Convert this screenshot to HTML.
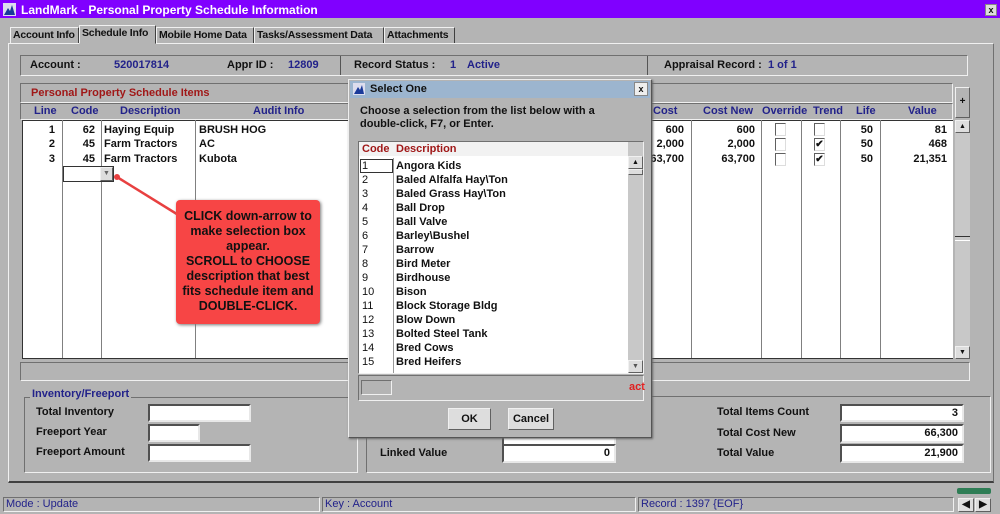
<!DOCTYPE html>
<html><head><meta charset="utf-8"><style>
*{box-sizing:border-box;margin:0;padding:0}
body{width:1000px;height:514px;background:#b4b4b4;font-family:"Liberation Sans",sans-serif;font-size:11px;font-weight:bold;color:#111;position:relative;overflow:hidden}
.a{position:absolute;white-space:nowrap}
.blue{color:#22228a}
.red{color:#a01818}
.sunk{border:1px solid;border-color:#707070 #f0f0f0 #f0f0f0 #707070}
.rais{border:1px solid;border-color:#f0f0f0 #606060 #606060 #f0f0f0}
.inp{position:absolute;background:#fff;border:2px solid;border-color:#505050 #e8e8e8 #e8e8e8 #505050;text-align:right;padding-right:4px;line-height:14px}
.tab{position:absolute;top:27px;height:17px;border:1px solid;border-color:#f0f0f0 #404040 #b4b4b4 #f0f0f0;padding:1px 2px;font-size:10.5px;white-space:nowrap;overflow:hidden;letter-spacing:-0.2px}
.vl{position:absolute;top:120px;height:238px;width:1px;background:#808080}
.cb{position:absolute;width:11px;height:13px;background:#fff;border:1px solid;border-color:#606060 #ddd #ddd #606060;font-size:10px;line-height:11px;text-align:center}
.r{text-align:right}
</style></head><body>
<!-- title -->
<div class="a" style="left:0;top:0;width:1000px;height:18px;background:#8000ff"></div>
<svg class="a" style="left:3px;top:3px" width="13" height="13"><rect width="13" height="13" fill="#dde"/><path d="M1 12 L5 5 L7 8 L9 2 L12 12Z" fill="#1a3a9a"/></svg>
<div class="a" style="left:21px;top:3px;color:#fff;font-size:12px">LandMark - Personal Property Schedule Information</div>
<div class="a" style="left:985px;top:4px;width:12px;height:12px;background:#ddd;border:1px solid #888;font-size:9px;line-height:10px;text-align:center">x</div>
<!-- tabs -->
<div class="tab" style="left:10px;width:69px">Account Info</div>
<div class="tab" style="left:79px;top:25px;height:19px;width:77px;background:#b4b4b4;z-index:2">Schedule Info</div>
<div class="tab" style="left:156px;width:98px">Mobile Home Data</div>
<div class="tab" style="left:254px;width:130px">Tasks/Assessment Data</div>
<div class="tab" style="left:384px;width:71px">Attachments</div>
<div class="a" style="left:8px;top:43px;width:986px;height:440px;border:1px solid;border-color:#f0f0f0 #707070 #404040 #f0f0f0;border-bottom-width:2px"></div>
<!-- info bar -->
<div class="a sunk" style="left:20px;top:55px;width:948px;height:21px"></div>
<div class="a" style="left:340px;top:56px;width:1px;height:19px;background:#555"></div>
<div class="a" style="left:647px;top:56px;width:1px;height:19px;background:#555"></div>
<div class="a" style="left:30px;top:59px">Account :</div>
<div class="a blue" style="left:114px;top:59px">520017814</div>
<div class="a" style="left:227px;top:59px">Appr ID :</div>
<div class="a blue" style="left:288px;top:59px">12809</div>
<div class="a" style="left:354px;top:59px">Record Status :</div>
<div class="a blue" style="left:450px;top:59px">1</div>
<div class="a blue" style="left:467px;top:59px">Active</div>
<div class="a" style="left:664px;top:59px">Appraisal Record :</div>
<div class="a blue" style="left:768px;top:59px">1 of 1</div>
<!-- schedule grid -->
<div class="a sunk" style="left:20px;top:83px;width:933px;height:20px"></div>
<div class="a red" style="left:31px;top:87px">Personal Property Schedule Items</div>
<div class="a sunk" style="left:20px;top:103px;width:933px;height:17px"></div>
<div class="a blue" style="left:34px;top:105px">Line</div>
<div class="a blue" style="left:71px;top:105px">Code</div>
<div class="a blue" style="left:120px;top:105px">Description</div>
<div class="a blue" style="left:253px;top:105px">Audit Info</div>
<div class="a blue" style="left:653px;top:105px">Cost</div>
<div class="a blue" style="left:703px;top:105px">Cost New</div>
<div class="a blue" style="left:762px;top:105px">Override</div>
<div class="a blue" style="left:813px;top:105px">Trend</div>
<div class="a blue" style="left:856px;top:105px">Life</div>
<div class="a blue" style="left:908px;top:105px">Value</div>
<div class="a" style="left:22px;top:120px;width:931px;height:239px;background:#fff;border:1px solid #333;border-right:none"></div>
<div class="vl" style="left:62px"></div><div class="vl" style="left:101px"></div><div class="vl" style="left:195px"></div>
<div class="vl" style="left:691px"></div><div class="vl" style="left:761px"></div><div class="vl" style="left:801px"></div><div class="vl" style="left:840px"></div><div class="vl" style="left:880px"></div>
<div class="a r" style="left:30px;top:124px;width:25px">1</div><div class="a r" style="left:30px;top:138px;width:25px">2</div><div class="a r" style="left:30px;top:153px;width:25px">3</div>
<div class="a r" style="left:64px;top:124px;width:31px">62</div><div class="a r" style="left:64px;top:138px;width:31px">45</div><div class="a r" style="left:64px;top:153px;width:31px">45</div>
<div class="a" style="left:104px;top:124px">Haying Equip</div><div class="a" style="left:104px;top:138px">Farm Tractors</div><div class="a" style="left:104px;top:153px">Farm Tractors</div>
<div class="a" style="left:199px;top:124px">BRUSH HOG</div><div class="a" style="left:199px;top:138px">AC</div><div class="a" style="left:199px;top:153px">Kubota</div>
<div class="a r" style="left:640px;top:124px;width:44px">600</div><div class="a r" style="left:640px;top:138px;width:44px">2,000</div><div class="a r" style="left:640px;top:153px;width:44px">63,700</div>
<div class="a r" style="left:700px;top:124px;width:55px">600</div><div class="a r" style="left:700px;top:138px;width:55px">2,000</div><div class="a r" style="left:700px;top:153px;width:55px">63,700</div>
<div class="cb" style="left:775px;top:123px"></div><div class="cb" style="left:775px;top:138px"></div><div class="cb" style="left:775px;top:153px"></div>
<div class="cb" style="left:814px;top:123px"></div><div class="cb" style="left:814px;top:138px">✔</div><div class="cb" style="left:814px;top:153px">✔</div>
<div class="a r" style="left:845px;top:124px;width:28px">50</div><div class="a r" style="left:845px;top:138px;width:28px">50</div><div class="a r" style="left:845px;top:153px;width:28px">50</div>
<div class="a r" style="left:885px;top:124px;width:62px">81</div><div class="a r" style="left:885px;top:138px;width:62px">468</div><div class="a r" style="left:885px;top:153px;width:62px">21,351</div>
<div class="a" style="left:63px;top:166px;width:51px;height:16px;background:#fff;border:1px solid #333"></div>
<div class="a rais" style="left:100px;top:167px;width:13px;height:14px;background:#ddd;font-size:7px;text-align:center;line-height:12px;color:#666">▼</div>
<!-- right scroll -->
<div class="a rais" style="left:955px;top:87px;width:15px;height:31px;font-size:10px;text-align:center;line-height:28px">+</div>
<div class="a" style="left:955px;top:120px;width:15px;height:239px;background:#c8c8c8"></div>
<div class="a rais" style="left:955px;top:120px;width:15px;height:13px;background:#ddd;font-size:7px;text-align:center;line-height:11px">▲</div>
<div class="a rais" style="left:955px;top:346px;width:15px;height:13px;background:#ddd;font-size:7px;text-align:center;line-height:11px">▼</div>
<div class="a" style="left:955px;top:236px;width:15px;height:5px;border-top:1px solid #333;border-bottom:1px solid #fff"></div>
<div class="a sunk" style="left:20px;top:362px;width:950px;height:19px"></div>
<!-- inventory -->
<div class="a sunk" style="left:24px;top:397px;width:334px;height:76px"></div>
<div class="a blue" style="left:30px;top:388px;background:#b4b4b4;padding:0 2px">Inventory/Freeport</div>
<div class="a" style="left:36px;top:406px">Total Inventory</div>
<div class="a" style="left:36px;top:426px">Freeport Year</div>
<div class="a" style="left:36px;top:446px">Freeport Amount</div>
<div class="inp" style="left:148px;top:404px;width:103px;height:18px"></div>
<div class="inp" style="left:148px;top:424px;width:52px;height:18px"></div>
<div class="inp" style="left:148px;top:444px;width:103px;height:18px"></div>
<!-- totals -->
<div class="a sunk" style="left:366px;top:396px;width:625px;height:77px"></div>
<div class="a" style="left:380px;top:447px">Linked Value</div>
<div class="inp" style="left:502px;top:436px;width:114px;height:8px;border-bottom:none"></div>
<div class="inp" style="left:502px;top:444px;width:114px;height:19px">0</div>
<div class="a" style="left:717px;top:406px">Total Items Count</div>
<div class="a" style="left:717px;top:427px">Total Cost New</div>
<div class="a" style="left:717px;top:447px">Total Value</div>
<div class="inp" style="left:840px;top:404px;width:124px;height:18px">3</div>
<div class="inp" style="left:840px;top:424px;width:124px;height:19px">66,300</div>
<div class="inp" style="left:840px;top:444px;width:124px;height:19px">21,900</div>
<!-- status -->
<div class="a sunk blue" style="left:3px;top:497px;width:317px;height:15px;font-weight:normal;padding-left:2px;line-height:13px">Mode : Update</div>
<div class="a sunk blue" style="left:322px;top:497px;width:314px;height:15px;font-weight:normal;padding-left:2px;line-height:13px">Key : Account</div>
<div class="a sunk blue" style="left:638px;top:497px;width:316px;height:15px;font-weight:normal;padding-left:2px;line-height:13px">Record : 1397 {EOF}</div>
<div class="a" style="left:957px;top:488px;width:34px;height:6px;background:#2e7d55;border-radius:2px"></div>
<div class="a rais" style="left:958px;top:498px;width:16px;height:14px;background:#ddd;font-size:10px;text-align:center;line-height:12px">◀</div>
<div class="a rais" style="left:975px;top:498px;width:16px;height:14px;background:#ddd;font-size:10px;text-align:center;line-height:12px">▶</div>
<!-- callout -->
<svg class="a" style="left:0;top:0" width="400" height="300"><line x1="117" y1="177" x2="180" y2="216" stroke="#e84040" stroke-width="2.5"/><circle cx="117" cy="177" r="3" fill="#e84040"/></svg>
<div class="a" style="left:176px;top:200px;width:144px;height:124px;background:#f74545;border-radius:4px;box-shadow:1px 1px 3px #777;text-align:center;font-size:12.5px;line-height:15px;padding-top:9px;white-space:normal">CLICK down-arrow to make selection box appear.<br>SCROLL to CHOOSE description that best fits schedule item and DOUBLE-CLICK.</div>
<!-- dialog -->
<div class="a" style="left:348px;top:79px;width:304px;height:359px;background:#b4b4b4;border:1px solid;border-color:#eee #555 #555 #eee;box-shadow:1px 1px 2px #666"></div>
<div class="a" style="left:350px;top:81px;width:300px;height:17px;background:#9cb5cf"></div>
<svg class="a" style="left:353px;top:83px" width="12" height="12"><rect width="12" height="12" fill="#dde"/><path d="M1 11 L5 4 L7 7 L9 2 L11 11Z" fill="#1a3a9a"/></svg>
<div class="a" style="left:370px;top:83px">Select One</div>
<div class="a" style="left:634px;top:82px;width:14px;height:14px;background:#eee;border:1px solid #888;font-size:9px;line-height:12px;text-align:center">x</div>
<div class="a" style="left:360px;top:105px;line-height:13px">Choose a selection from the list below with a<br>double-click, F7, or Enter.</div>
<div class="a sunk" style="left:358px;top:141px;width:286px;height:233px;background:#fff"></div>
<div class="a" style="left:359px;top:142px;width:269px;height:14px;background:#f2f2f2"></div>
<div class="a red" style="left:362px;top:143px">Code</div><div class="a red" style="left:396px;top:143px">Description</div>
<div class="a" style="left:628px;top:142px;width:15px;height:231px;background:#c8c8c8"></div>
<div class="a rais" style="left:628px;top:156px;width:15px;height:13px;background:#ddd;font-size:7px;text-align:center;line-height:11px">▲</div>
<div class="a rais" style="left:628px;top:169px;width:15px;height:6px;background:#ddd"></div>
<div class="a rais" style="left:628px;top:360px;width:15px;height:13px;background:#ddd;font-size:7px;text-align:center;line-height:11px;color:#555">▼</div>
<div class="a" style="left:393px;top:158px;width:1px;height:215px;background:#999"></div>
<div class="a" style="left:360px;top:159px;width:33px;height:14px;border:1px solid #333"></div>
<div class="a" style="left:362px;top:159px;font-weight:normal;line-height:14px">1<br>2<br>3<br>4<br>5<br>6<br>7<br>8<br>9<br>10<br>11<br>12<br>13<br>14<br>15</div>
<div class="a" style="left:396px;top:159px;line-height:14px">Angora Kids<br>Baled Alfalfa Hay\Ton<br>Baled Grass Hay\Ton<br>Ball Drop<br>Ball Valve<br>Barley\Bushel<br>Barrow<br>Bird Meter<br>Birdhouse<br>Bison<br>Block Storage Bldg<br>Blow Down<br>Bolted Steel Tank<br>Bred Cows<br>Bred Heifers</div>
<div class="a sunk" style="left:358px;top:375px;width:286px;height:26px"></div>
<div class="a sunk" style="left:361px;top:380px;width:31px;height:15px"></div>
<div class="a" style="left:629px;top:381px;color:#e02020">act</div>
<div class="a rais" style="left:448px;top:408px;width:43px;height:22px;background:#ddd;text-align:center;line-height:20px">OK</div>
<div class="a rais" style="left:508px;top:408px;width:46px;height:22px;background:#ddd;text-align:center;line-height:20px">Cancel</div>
</body></html>
